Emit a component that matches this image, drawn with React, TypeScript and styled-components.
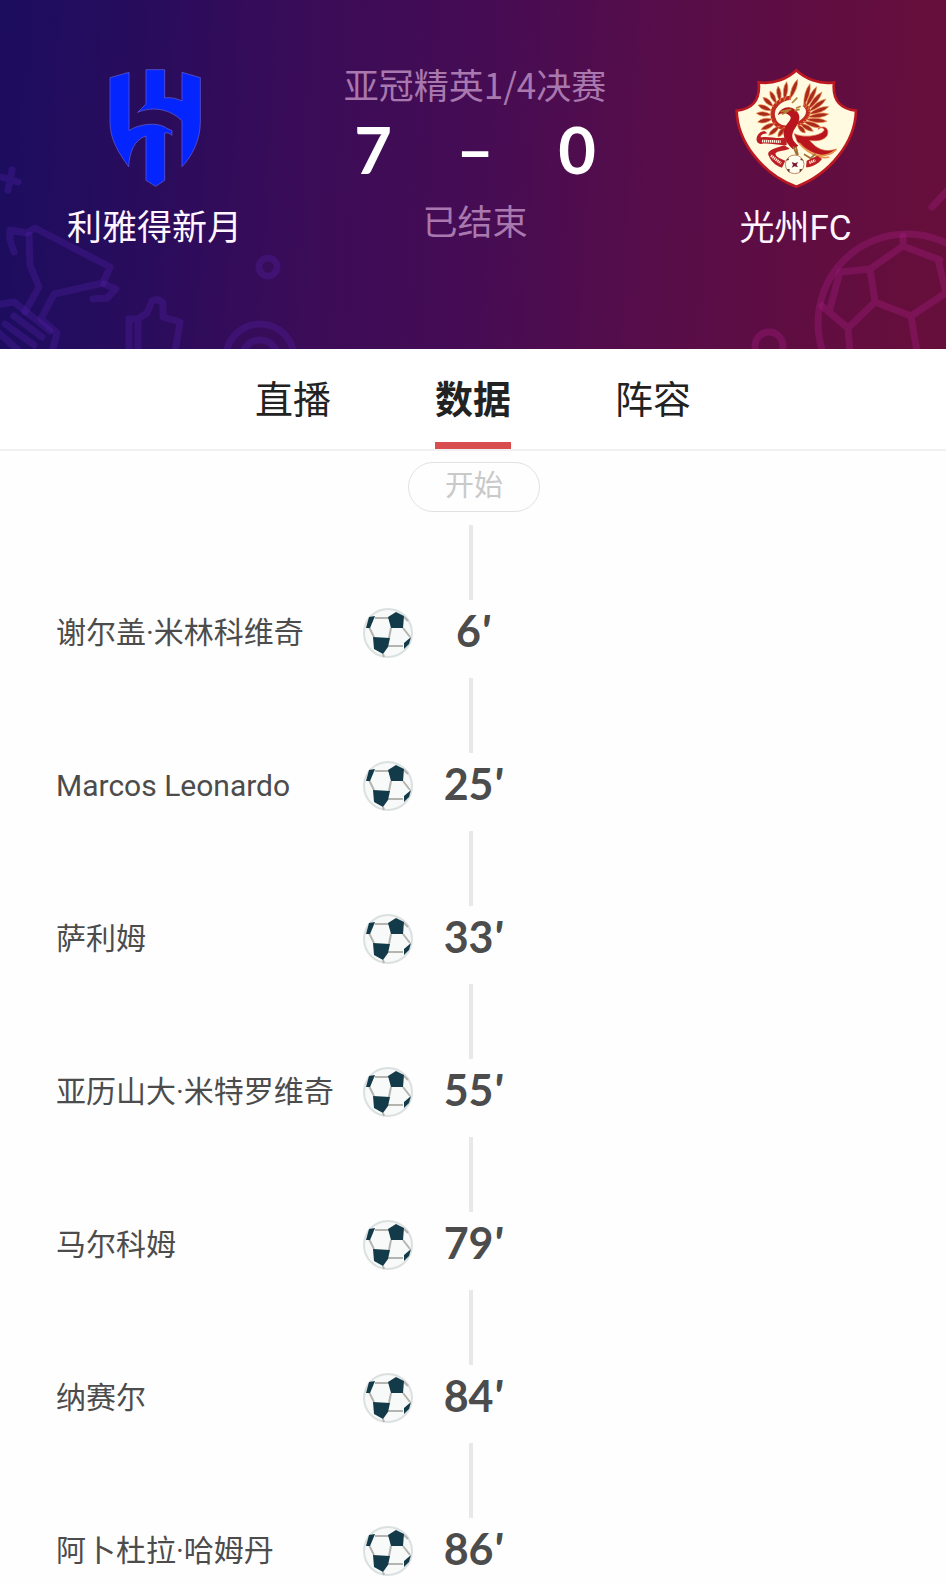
import React from 'react';
import styled, { createGlobalStyle } from 'styled-components';

const GlobalStyle = createGlobalStyle`
  *, *::before, *::after { box-sizing: border-box; }
  body {
    margin: 0;
    background: #fefefe;
    color: #4c4c4c;
    font-family: Roboto, 'Noto Sans CJK SC', sans-serif;
  }
`;

const Header = styled.header`
  position: relative;
  overflow: hidden;
  height: 349px;
  padding: 62px 0 0 4px;
  background: linear-gradient(93deg, #1c0d5f 0%, #2a0c5c 17%, #3c0c58 34%, #450c54 50%, #560d4a 68%, #600d41 85%, #670f3b 100%);
`;

const Decoration = styled.svg<{ $side: 'left' | 'right' }>`
  position: absolute;
  bottom: 0;
  ${(p) => p.$side}: 0;
  fill: none;
  stroke: ${(p) => (p.$side === 'left' ? '#5a24b4' : '#a81e84')};
  stroke-opacity: ${(p) => (p.$side === 'left' ? 0.28 : 0.34)};
  stroke-width: 7;
  stroke-linejoin: round;
  stroke-linecap: round;
`;

const Scoreboard = styled.div`
  position: relative;
  display: grid;
  grid-template-columns: 1fr 340px 1fr;
`;

const Team = styled.div`
  display: flex;
  flex-direction: column;
  align-items: center;
  gap: 18px;
  padding-top: 5px;
`;

const Crest = styled.svg`
  width: 120px;
  height: 120px;
  overflow: visible;
`;

const TeamName = styled.span`
  font-size: 35px;
  line-height: 48px;
  color: #fff4ff;
`;

const Center = styled.div`
  display: flex;
  flex-direction: column;
  align-items: center;
`;

const Caption = styled.span`
  font-family: 'Noto Sans CJK SC', sans-serif;
  font-size: 35px;
  line-height: 44px;
  color: #a878ae;
`;

const Score = styled.div`
  display: grid;
  grid-template-columns: repeat(3, 1fr);
  width: 306px;
  margin: 4px 0 10px;
  text-align: center;
  font-family: Lato, sans-serif;
  font-size: 65px;
  font-weight: 700;
  line-height: 78px;
  color: #fff;
`;

const Tabs = styled.nav`
  display: flex;
  justify-content: center;
  gap: 104px;
  height: 102px;
  background: #fff;
  border-bottom: 2px solid #f1f1f1;
`;

const Tab = styled.button<{ $active?: boolean }>`
  padding: 2px 0 0;
  border: 0;
  border-bottom: 7px solid ${(p) => (p.$active ? '#d84d4d' : 'transparent')};
  background: none;
  font-family: 'Noto Sans CJK SC', sans-serif;
  font-size: 38px;
  font-weight: ${(p) => (p.$active ? 700 : 400)};
  line-height: 88px;
  color: #222;
  cursor: pointer;
`;

const Main = styled.main`
  display: flex;
  flex-direction: column;
  padding: 11px 0 0 2px;
`;

const StartPill = styled.div`
  align-self: center;
  width: 132px;
  height: 50px;
  border: 1px solid #e2e2e2;
  border-radius: 25px;
  text-align: center;
  font-size: 29px;
  line-height: 46px;
  color: #c9c9c9;
`;

const Timeline = styled.ol`
  display: flex;
  flex-direction: column;
  gap: 12px;
  margin: 13px 0 0;
  padding: 0 6px 0 0;
  list-style: none;
`;

const Item = styled.li`
  &::before {
    content: '';
    display: block;
    width: 4px;
    height: 75px;
    margin: 0 auto;
    background: #e8e8e8;
  }
`;

const EventRow = styled.div`
  display: grid;
  grid-template-columns: 1fr 116px 1fr;
  align-items: center;
  height: 66px;
`;

const Scorer = styled.div`
  display: flex;
  align-items: center;
  justify-content: space-between;
  padding-left: 54px;
  font-size: 30px;
  line-height: 44px;
  white-space: nowrap;
`;

const Minute = styled.time`
  padding: 0 0 4px 4px;
  text-align: center;
  font-family: Lato, sans-serif;
  font-size: 43px;
  font-weight: 700;
  line-height: 62px;
`;

const MinuteMark = styled.span`
  font-style: italic;
  font-weight: 900;
`;

const GoalBall = () => (
  <svg width="50" height="50" viewBox="0 0 50 50" role="img" aria-label="进球">
    <circle cx="25" cy="25" r="24" fill="#f8f9f9" stroke="#dbe0e0" strokeWidth="2" />
    <path
      d="M12 10H26M6 19L11 29M28 20L26 30M40 20L47 29M25 38H40M41 9L45 13M20 46L21 49"
      fill="none"
      stroke="#b4b5b0"
      strokeWidth="2"
    />
    <g fill="#123a48">
      <path d="M25 9L33 4L41 8L40 20L28 20Z" />
      <path d="M10 29L27 30L25 39L20 46L11 41Z" />
      <path d="M6 9L12 8L10 13L7 20L3 20Z" />
      <path d="M48 29L46 36L41 41L41 35Z" />
    </g>
  </svg>
);

const HilalCrest = () => (
  <Crest viewBox="2 20 360 360" role="img" aria-label="利雅得新月队徽">
    <g fill="#0525ff" stroke="#6a62cf" strokeWidth="2">
      <path d="M47 52L104 36V211C135 189 193 185 216 203L233 211V225C226 218 218 216 211 218V360L184 378L155 360V227C120 237 105 277 103 319C72 277 47 235 47 186Z" />
      <path d="M155 28H211V113C229 110 248 115 263 122V36L318 52V186C318 235 295 286 263 319V181C226 146 177 137 130 156L155 131Z" />
    </g>
  </Crest>
);

// Each feather runs from its tip to its root on the wing: tipX, tipY, rootX, rootY.
const feathers = [
  [205, 57, 181, 118], [172, 64, 165, 120], [146, 77, 152, 124], [122, 92, 141, 130],
  [101, 111, 132, 139], [86, 134, 127, 151], [81, 159, 126, 163], [85, 185, 129, 176],
  [95, 208, 138, 188], [118, 225, 151, 197], [146, 230, 166, 200],
  [242, 70, 223, 138], [262, 79, 229, 142], [278, 95, 235, 148], [290, 116, 238, 154],
  [298, 139, 238, 162], [298, 161, 235, 170], [293, 183, 229, 177], [275, 201, 221, 183],
  [252, 213, 212, 189], [228, 218, 204, 193],
];

const featherPath = ([tx, ty, rx, ry]: number[]) => {
  const length = Math.hypot(rx - tx, ry - ty);
  const nx = (-(ry - ty) / length) * 13;
  const ny = ((rx - tx) / length) * 13;
  const cx = tx * 0.6 + rx * 0.4;
  const cy = ty * 0.6 + ry * 0.4;
  return `M${tx} ${ty}Q${cx + nx} ${cy + ny} ${rx} ${ry}Q${cx - nx} ${cy - ny} ${tx} ${ty}Z`;
};

const GwangjuCrest = () => (
  <Crest viewBox="20 20 360 360" role="img" aria-label="光州FC队徽">
    <path
      d="M201 30C227 55 270 73 314 66C309 112 326 145 380 151C378 244 302 342 201 379C100 342 24 244 22 151C76 145 93 112 88 66C132 73 175 55 201 30Z"
      fill="#fffae0"
      stroke="#bb1822"
      strokeWidth="8"
    />
    <path d="M184 112C147 116 125 143 131 171C136 190 150 202 170 202M224 132C246 148 239 174 205 192" fill="none" stroke="#c02a20" strokeWidth="13" />
    <g fill="#a92a1e" stroke="#ee9048" strokeWidth="2">
      {feathers.map((f) => (
        <path key={f.join()} d={featherPath(f)} />
      ))}
    </g>
    <path d="M145 165C153 139 184 134 199 150C224 172 200 198 192 213C183 233 194 246 207 256L191 267C166 245 153 218 171 194C184 177 190 171 177 163C167 156 154 158 145 165Z" fill="#b9151e" />
    <path d="M154 154L186 147M158 162L178 151M188 128L204 112M200 144L214 138M195 151L211 147" stroke="#b08238" strokeWidth="5" />
    <path d="M195 220C225 235 279 226 285 208C280 198 263 203 267 207C284 190 302 207 293 226C281 243 256 242 240 240C263 267 286 278 321 266C306 294 254 292 204 244Z" fill="#b9151e" stroke="#d65a35" strokeWidth="2" />
    <path d="M209 248C241 286 280 300 321 268M230 268C255 286 275 296 300 290" fill="none" stroke="#e8954a" strokeWidth="5" />
    <path d="M192 258L203 286M200 260L206 284M224 282L244 294L258 280" fill="none" stroke="#9c7133" strokeWidth="5" />
    <path d="M106 212C82 214 72 246 93 251C119 246 148 257 172 254V231C146 237 118 226 94 231C94 219 108 222 114 219Z" fill="#bd1e24" />
    <path d="M165 255C140 264 112 269 117 284C124 301 136 315 158 322L168 301C148 294 136 286 139 278C148 270 166 272 181 265Z" fill="#bd1e24" />
    <path d="M232 301L264 286L278 296C267 311 247 321 230 321Z" fill="#bd1e24" />
    <path d="M98 242L154 244M125 286L155 309M240 307L258 300" fill="none" stroke="#fff0dc" strokeWidth="8" strokeDasharray="4 2" />
    <circle cx="196" cy="312" r="28" fill="#fffdf0" stroke="#c58a62" strokeWidth="3" />
    <path d="M187 305L197 309L206 305L202 314L206 321L196 318L187 322L191 314Z" fill="#7c1832" />
    <path d="M177 293L169 301L179 299ZM215 293L223 301L213 299ZM172 327L180 337L181 326ZM219 327L211 337L211 326Z" fill="#5f3825" />
  </Crest>
);

const events = [
  { scorer: '谢尔盖·米林科维奇', minute: 6 },
  { scorer: 'Marcos Leonardo', minute: 25 },
  { scorer: '萨利姆', minute: 33 },
  { scorer: '亚历山大·米特罗维奇', minute: 55 },
  { scorer: '马尔科姆', minute: 79 },
  { scorer: '纳赛尔', minute: 84 },
  { scorer: '阿卜杜拉·哈姆丹', minute: 86 },
];

export default function App() {
  return (
    <>
      <GlobalStyle />
      <Header>
        <Decoration $side="left" width="310" height="200" viewBox="0 149 310 200" aria-hidden="true">
          <path d="M12 170L8 190M1 177L18 182" />
          <path d="M14 252L10 240V230L27 233L35 228L110 267L103 283L54 294L41 319L57 333L52 352" />
          <path d="M29 235L30 265L39 287L25 312M104 284L116 289L107 298L93 299" />
          <path d="M-4 305L14 302L50 331M14 316L42 337M5 324L34 345M-2 332L20 352" />
          <path d="M129 352V319H138V352M138 319L147 313L152 301Q159 298 163 303V317L180 322L175 352" />
          <circle cx="268" cy="267" r="9" />
          <circle cx="260" cy="358" r="34" />
          <circle cx="260" cy="358" r="18" />
        </Decoration>
        <Decoration $side="right" width="206" height="180" viewBox="740 169 206 180" aria-hidden="true">
          <circle cx="907" cy="323" r="89" />
          <path d="M840 272L870 269L903 246L940 260M903 246V236M870 269L875 302L911 316L946 293L938 259M875 302L848 328L829 312M829 312L822 306M829 312L840 272M848 328L850 352M911 316L917 352" />
          <circle cx="769" cy="346" r="14" />
          <path d="M932 207L948 190" />
        </Decoration>
        <Scoreboard>
          <Team>
            <HilalCrest />
            <TeamName>利雅得新月</TeamName>
          </Team>
          <Center>
            <Caption>亚冠精英1/4决赛</Caption>
            <Score>
              <span>7</span>
              <span>–</span>
              <span>0</span>
            </Score>
            <Caption>已结束</Caption>
          </Center>
          <Team>
            <GwangjuCrest />
            <TeamName>光州FC</TeamName>
          </Team>
        </Scoreboard>
      </Header>
      <Tabs>
        <Tab type="button">直播</Tab>
        <Tab type="button" $active aria-current="page">数据</Tab>
        <Tab type="button">阵容</Tab>
      </Tabs>
      <Main>
        <StartPill>开始</StartPill>
        <Timeline>
          {events.map((e) => (
            <Item key={e.minute}>
              <EventRow>
                <Scorer>
                  {e.scorer}
                  <GoalBall />
                </Scorer>
                <Minute>
                  {e.minute}
                  <MinuteMark>'</MinuteMark>
                </Minute>
              </EventRow>
            </Item>
          ))}
        </Timeline>
      </Main>
    </>
  );
}
